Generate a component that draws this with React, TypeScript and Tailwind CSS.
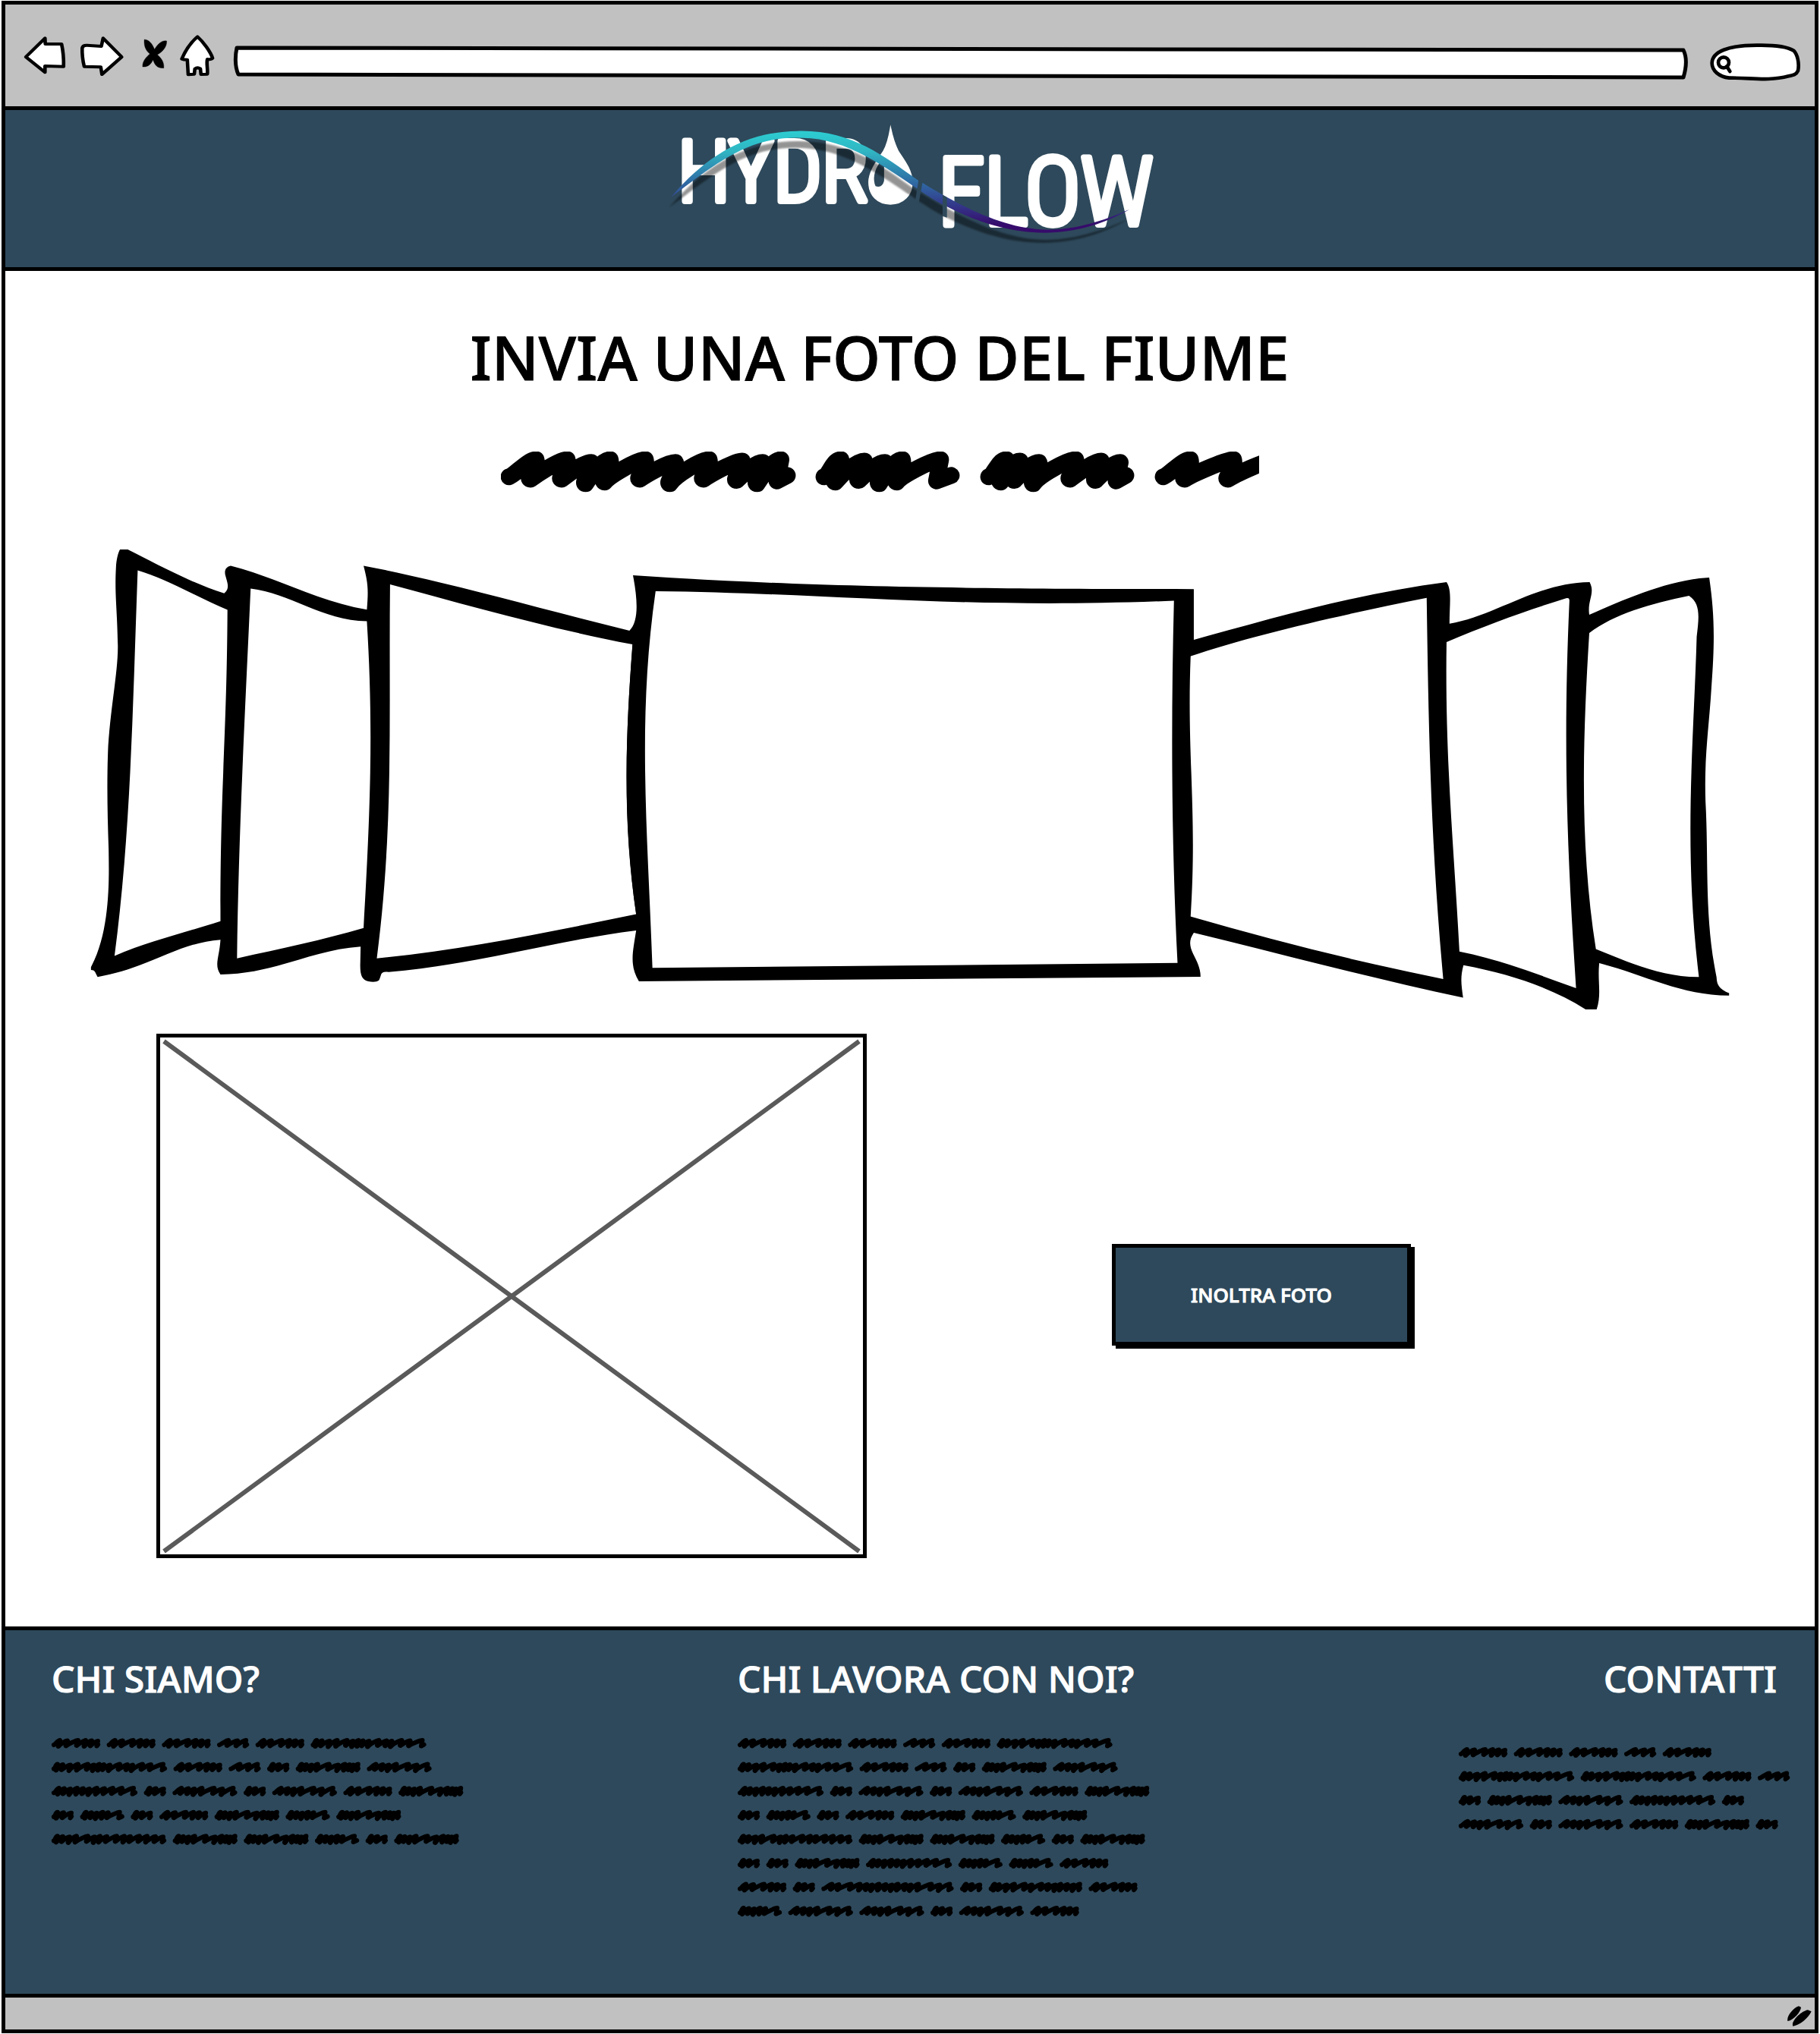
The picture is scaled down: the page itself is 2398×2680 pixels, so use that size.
import React from "react";

const MAIN_FONT = "font-['Noto_Sans',sans-serif]";

/* A scribbled word: its total width and the x of every crest of the pen. */
type Word = { width: number; peaks: number[] };

const WORDS: Record<string, Word> = {
  A: { width: 64, peaks: [11, 21, 36, 45, 53, 61] },
  B: { width: 42, peaks: [16, 27, 39] },
  C: { width: 152, peaks: [8, 15, 25, 35, 49, 56, 63, 69, 77, 91, 100, 107, 121, 131, 148] },
  D: { width: 29, peaks: [8, 16, 26] },
  E: { width: 85, peaks: [8, 14, 21, 29, 45, 56, 65, 71, 76, 82] },
  F: { width: 85, peaks: [13, 21, 29, 39, 56, 66, 81] },
  G: { width: 113, peaks: [10, 17, 25, 34, 42, 50, 60, 70, 82, 94, 109] },
  H: { width: 58, peaks: [8, 15, 22, 30, 37, 53] },
  I: { width: 151, peaks: [8, 15, 24, 33, 49, 57, 64, 73, 87, 96, 104, 117, 126, 137, 147] },
  J: { width: 174, peaks: [15, 23, 40, 51, 60, 67, 76, 85, 93, 101, 111, 118, 128, 146, 156, 170] },
  K: { width: 123, peaks: [8, 14, 24, 34, 49, 57, 71, 79, 88, 95, 104, 112, 120] },
};

const HEADLINE: { x: number; word: Word }[] = [
  { x: 0, word: { width: 388, peaks: [50, 91, 119, 144, 194, 230, 278, 318, 345, 369] } },
  { x: 415, word: { width: 189, peaks: [33, 64, 91, 114, 168] } },
  { x: 632, word: { width: 202, peaks: [34, 52, 77, 129, 159, 184] } },
  { x: 862, word: { width: 180, peaks: [50, 107, 162] } },
];

function scribble(word: Word, x0: number, y0: number, k: number) {
  const pen = 2.9 * k;
  const top = y0 + pen;
  const low = y0 + 14.5 * k - pen;
  let d = `M${x0 + pen} ${low - 2.5 * k}`;
  let px = x0 + pen;
  word.peaks.forEach((p, i) => {
    const prev = i === 0 ? 0 : word.peaks[i - 1];
    const wide = p - prev > 11 * k;
    const x = x0 + p - (wide ? k : 0);
    const t = top + (wide ? 0 : (i % 3) * 0.5 * k);
    const b = low - (wide ? 1.6 * k : ((i + 1) % 3) * 0.6 * k);
    const tx = x - 2 * k;
    d += ` C${px + 2 * k} ${low - 3 * k} ${x - 3 * k} ${t} ${x} ${t}`;
    if (i < word.peaks.length - 1) {
      d += ` C${x + k} ${t + 3 * k} ${tx - 2 * k} ${b} ${tx} ${b}`;
      px = tx;
    } else {
      d += ` L${x - 1.5 * k} ${low - k} L${x0 + word.width - pen} ${low - 3 * k}`;
    }
  });
  return d;
}

function ScribbleText({ lines, width, label }: { lines: string[]; width: number; label: string }) {
  const pitch = 31.6;
  const height = Math.ceil((lines.length - 1) * pitch + 16);
  return (
    <svg role="img" aria-label={label} width={width} height={height} viewBox={`0 0 ${width} ${height}`} className="block max-w-full overflow-visible">
      <g fill="none" stroke="#000" strokeWidth="6" strokeLinecap="round" strokeLinejoin="round">
        {lines.map((line, row) => {
          let x = 0;
          return line.split("").map((key, i) => {
            const word = WORDS[key];
            const d = scribble(word, x, row * pitch, 1);
            x += word.width + 8.7;
            return <path key={`${row}-${i}`} d={d} />;
          });
        })}
      </g>
    </svg>
  );
}

function ToolButton({ label, left, width, fill, d }: { label: string; left: number; width: number; fill: string; d: string }) {
  return (
    <button type="button" aria-label={label} className="shrink-0">
      <svg width={width} height="68" viewBox={`${left} 39 ${width} 68`} className="block overflow-visible">
        <g transform="scale(.38265 .33333)">
          <path d={d} fill={fill} stroke="#000" strokeWidth={fill === "#000" ? 1 : 12} strokeLinejoin="round" />
        </g>
      </svg>
    </button>
  );
}

function Toolbar() {
  return (
    <div className="flex h-[134px] items-center gap-[18px] bg-[#c1c1c1] pl-6 pr-[17px]">
      <ToolButton label="Indietro" left={31} width={56} fill="#fff" d="M89 225L155 151L156 174L212 174Q220 215 219 263L155 261L155 286Z" />
      <ToolButton label="Avanti" left={105} width={58} fill="#fff" d="M283 190Q285 178 300 179L349 183L355 151L419 225L351 294L347 265L290 263Q282 225 283 190Z" />
      <ToolButton label="Interrompi" left={181} width={39} fill="#000" d="M497 156C515 157 525 175 532 195C545 170 560 158 574 162C575 185 560 205 542 216C555 230 566 245 564 269C540 270 532 255 527 236C520 255 508 266 491 264C490 240 505 225 516 213C500 198 495 178 497 156Z" />
      <ToolButton label="Home" left={238} width={46} fill="#fff" d="M680 145C700 165 725 205 732 230Q728 236 714 234C710 252 716 270 714 293L692 294L690 272Q680 264 671 272L669 293L648 295L645 236Q632 236 626 233C640 195 660 165 680 145Z" />
      <div className="relative h-[68px] min-w-0 flex-1">
        <svg aria-hidden="true" viewBox="302 39 1924 68" preserveAspectRatio="none" className="absolute inset-0 h-full w-full">
          <path d="M312 63L2218 66C2224 78 2221 92 2218 102L314 98C309 87 310 72 312 63Z" fill="#fff" stroke="#000" strokeWidth="5" strokeLinejoin="round" />
        </svg>
        <input type="text" aria-label="Indirizzo" className="relative h-full w-full bg-transparent px-6 text-2xl outline-none" />
      </div>
      <div className="relative h-[68px] w-[130px] shrink-0">
        <svg aria-hidden="true" viewBox="2244 39 130 68" className="absolute inset-0 h-full w-full">
          <g transform="translate(2150 0) scale(.33333)" stroke="#000" strokeWidth="14" strokeLinecap="round" strokeLinejoin="round">
            <path d="M385 308C345 303 317 280 317 250C317 205 380 178 500 179C570 178 615 185 640 200C655 215 663 250 657 280C650 295 640 297 620 301C540 322 470 307 385 308Z" fill="#fff" />
            <circle cx="363" cy="247" r="21" fill="none" />
            <path d="M375 262L388 282" fill="none" />
          </g>
        </svg>
        <input type="search" aria-label="Cerca" className="relative h-full w-full bg-transparent pl-12 pr-3 text-xl outline-none" />
      </div>
    </div>
  );
}

function Logo() {
  const wave =
    "M55 360C150 215 270 100 440 98C600 92 700 195 805 292C900 365 1050 488 1200 488C1300 488 1390 440 1448 408C1380 460 1290 500 1190 500C1060 498 960 440 880 388C780 320 640 145 480 127C300 105 200 220 55 360Z";
  return (
    <svg role="img" aria-label="Hydro Flow" width="650" height="207" viewBox="874 145 650 207" className="block max-w-full">
      <defs>
        <linearGradient id="wave" gradientUnits="userSpaceOnUse" x1="0" y1="98" x2="0" y2="490">
          <stop offset="0" stopColor="#2ccdd2" />
          <stop offset=".2" stopColor="#30b6c3" />
          <stop offset=".5" stopColor="#2f6fa6" />
          <stop offset=".75" stopColor="#33378a" />
          <stop offset=".95" stopColor="#360b6b" />
        </linearGradient>
        <filter id="soft">
          <feGaussianBlur stdDeviation="3" />
        </filter>
      </defs>
      <g
        fill="#fff"
        stroke="#fff"
        strokeWidth="8"
        strokeLinejoin="round"
        className="font-['Liberation_Sans_Narrow','Roboto_Condensed',sans-serif] font-light"
      >
        <text x="893" y="265" fontSize="112">HYDR</text>
        <text x="1236" y="296" fontSize="124">FLOW</text>
      </g>
      <g transform="translate(860 140) scale(.43367 .33333)">
        <path d="M722 63C718 63 717 130 697 175C680 210 652 255 652 300C652 355 680 392 722 392C764 392 793 355 793 300C793 250 765 205 750 175C728 120 727 63 722 63Z" fill="#fff" stroke="#2e495b" strokeWidth="6" />
        <path d="M703 235L703 295Q697 325 677 316C668 290 672 255 690 222Z" fill="#2e495b" />
        <path d={wave} transform="translate(-5 40)" fill="#000" opacity=".42" filter="url(#soft)" />
        <path d={wave} fill="url(#wave)" />
        <path d="M808 290L820 300L808 385L797 378ZM881 350L894 360L894 440L881 434Z" fill="#2e495b" />
      </g>
    </svg>
  );
}

function Carousel() {
  return (
    <svg role="img" aria-label="Galleria di foto del fiume" viewBox="7 720 2384 612" className="block w-full">
      <g transform="translate(100 700) scale(.4847 .39541)">
        <path d="M120 61L141 61C220 110 310 170 403 207C420 190 411 170 407 150C402 130 408 118 421 115C550 155 660 235 791 261C795 200 795 175 782 115C1000 165 1250 255 1505 331L1560 345L1560 1325L1523 1330C1300 1365 1080 1445 850 1469C825 1465 832 1480 824 1496C818 1503 805 1502 795 1500C778 1495 772 1480 773 1440L774 1384C640 1395 540 1475 393 1477C375 1445 390 1420 393 1361C280 1370 200 1455 59 1485C52 1470 52 1462 41 1462L41 1452C95 1330 90 1150 89 1060C86 950 84 850 87 740C92 600 115 470 114 380C112 250 105 210 109 120C110 95 115 70 120 61Z" />
        <g fill="#fff">
          <path d="M168 130C250 160 330 220 412 262C410 700 392 850 393 1299C290 1340 200 1365 105 1415C150 1000 155 560 168 130Z" />
          <path d="M475 191C580 205 670 298 791 300C808 640 802 900 782 1322C670 1362 560 1390 438 1423C442 1000 462 550 475 191Z" />
          <path d="M854 177C1060 245 1290 325 1513 377C1490 750 1490 1000 1523 1276C1290 1335 1050 1395 818 1423C865 980 850 600 854 177Z" />
        </g>
      </g>
      <g transform="translate(1540 740) scale(.4847 .39541)">
        <path d="M50 267C290 185 520 105 755 68C770 95 763 140 763 207C890 180 1000 70 1144 68C1160 105 1137 130 1143 177C1240 125 1360 60 1469 53C1483 170 1485 260 1475 420C1468 560 1455 650 1459 800C1468 1000 1455 1180 1489 1385C1490 1410 1495 1422 1523 1438L1523 1446C1390 1445 1290 1375 1170 1338C1165 1400 1177 1440 1163 1492L1133 1492C1040 1420 930 1375 801 1345C792 1385 795 1410 800 1453C560 1390 310 1310 68 1237L50 1237Z" />
        <g fill="#fff">
          <path d="M55 317C240 240 480 175 701 121C706 560 712 930 746 1391C520 1335 290 1265 55 1181Z" />
          <path d="M755 268C870 208 980 160 1080 122Q1089 119 1089 130C1070 640 1085 1000 1107 1421C1000 1375 900 1325 790 1299C775 950 750 650 755 268Z" />
          <path d="M1143 238C1210 175 1310 140 1414 114C1445 140 1442 180 1435 250C1427 600 1398 950 1441 1384C1340 1385 1250 1335 1161 1291C1120 970 1122 650 1143 238Z" />
        </g>
      </g>
      <g transform="translate(800 720) scale(.52296 .39541)">
        <path d="M65 96C450 130 800 142 1478 142L1478 311L1470 366C1460 700 1487 880 1470 1233L1478 1287C1450 1340 1495 1370 1495 1434L80 1449C55 1395 65 1350 73 1280L73 1226C40 920 45 650 64 327L56 281C80 250 77 180 65 96Z" />
        <path d="M122 149C560 155 880 210 1428 181C1420 600 1422 1000 1437 1388L114 1404C102 950 75 580 122 149Z" fill="#fff" />
      </g>
    </svg>
  );
}

const COMPANY = ["AAABAC", "CABDEF", "GDFDFAE", "DHDAEHE", "IEEHDE"];
const TEAM = [...COMPANY, "DDEGHHA", "ADJDKA", "HFFDFA"];
const CONTACTS = ["AAABA", "CCAB", "DEFGD", "FDFAED"];

export default function App() {
  return (
    <div className={`${MAIN_FONT} flex min-h-screen flex-col bg-white px-[2px] pb-px pt-px text-black`}>
      <div className="flex flex-1 flex-col border-[5px] border-black">
        <Toolbar />
        <header className="flex justify-center border-y-[5px] border-black bg-[#2e495b]">
          <Logo />
        </header>

        <main className="pb-[90px] pt-[73px]">
          <div className="flex flex-col items-center pr-20">
            <h1 className="text-[80px] font-medium leading-none [-webkit-text-stroke:1px_currentColor]">INVIA UNA FOTO DEL FIUME</h1>
            <svg role="img" aria-label="Descrizione" width="999" height="54" viewBox="0 0 999 54" className="mt-[85px] block max-w-full">
              <g fill="none" stroke="#000" strokeWidth="22" strokeLinecap="round" strokeLinejoin="round">
                {HEADLINE.map(({ x, word }) => (
                  <path key={x} d={scribble(word, x, 0, 3.65)} />
                ))}
              </g>
            </svg>
          </div>

          <div className="mt-[71px]">
            <Carousel />
          </div>

          <section className="mt-[30px] grid grid-cols-[936fr_1040fr] items-center pl-[199px] pr-[209px]">
            <svg role="img" aria-label="Anteprima della foto" viewBox="0 0 936 691" className="block w-full">
              <rect x="2.5" y="2.5" width="931" height="686" fill="#fff" stroke="#000" strokeWidth="5" />
              <path d="M10 10L926 682M926 10L10 682" stroke="#5a5a5a" strokeWidth="6" />
            </svg>
            <div className="flex justify-center pb-1">
              <button type="button" className="h-[134px] w-[394px] border-[5px] border-black bg-[#2e495b] text-[26px] font-medium leading-none text-white shadow-[5px_4px_0_0_#000] [-webkit-text-stroke:1px_currentColor]">
                INOLTRA FOTO
              </button>
            </div>
          </section>
        </main>

        <footer className="grid flex-1 grid-cols-[904fr_950fr_437fr] border-y-[5px] border-black bg-[#2e495b] pl-[61px] pr-8 pt-10 text-white">
          <section>
            <h2 className="mb-[54px] text-5xl font-medium leading-none [-webkit-text-stroke:1px_currentColor]">CHI SIAMO?</h2>
            <ScribbleText lines={COMPANY} width={544} label="Testo su chi siamo" />
          </section>
          <section>
            <h2 className="mb-[54px] text-5xl font-medium leading-none [-webkit-text-stroke:1px_currentColor]">CHI LAVORA CON NOI?</h2>
            <ScribbleText lines={TEAM} width={544} label="Testo su chi lavora con noi" />
          </section>
          <section>
            <h2 className="mb-[66px] pr-[18px] text-right text-5xl font-medium leading-none [-webkit-text-stroke:1px_currentColor]">CONTATTI</h2>
            <ScribbleText lines={CONTACTS} width={437} label="Testo dei contatti" />
          </section>
        </footer>

        <div className="flex h-[42px] items-end justify-end bg-[#c1c1c1] pb-[3px] pr-1">
          <svg aria-hidden="true" width="32" height="28" viewBox="1425 1414 96 84">
            <path d="M1426 1474C1421 1455 1448 1422 1470 1415L1479 1419C1478 1438 1450 1470 1426 1474ZM1447 1494C1438 1475 1480 1434 1506 1430L1520 1436C1508 1462 1475 1490 1447 1494Z" />
          </svg>
        </div>
      </div>
    </div>
  );
}
